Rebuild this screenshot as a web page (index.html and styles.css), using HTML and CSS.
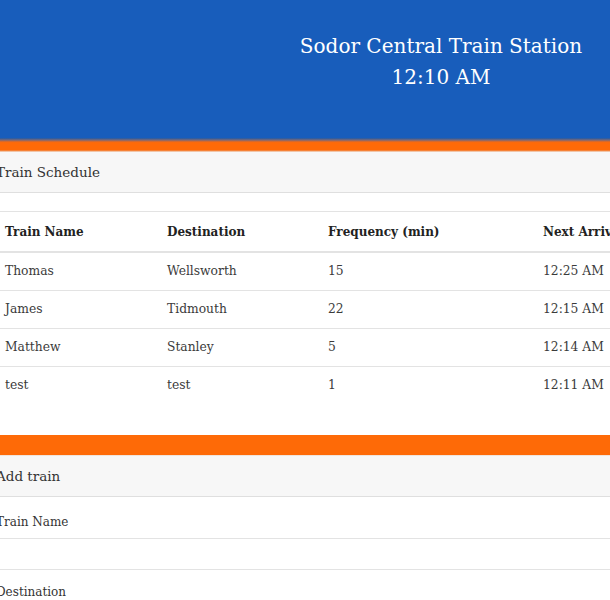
FILE: index.html
```html
<!DOCTYPE html>
<html lang="en">
<head>
<meta charset="utf-8">
<title>Sodor Central Train Station</title>
<link rel="stylesheet" href="styles.css">
</head>
<body>
<header class="hero">
  <div class="hero-text">
    <h1 class="title">Sodor Central Train Station</h1>
    <div class="clock">12:10 AM</div>
  </div>
</header>
<div class="band"></div>
<main class="page">
  <section class="card card-schedule">
    <div class="card-header">Train Schedule</div>
    <div class="card-body">
      <table class="schedule">
        <colgroup>
          <col class="c1"><col class="c2"><col class="c3"><col class="c4">
        </colgroup>
        <thead>
          <tr><th>Train Name</th><th>Destination</th><th>Frequency (min)</th><th>Next Arrival</th></tr>
        </thead>
        <tbody>
          <tr><td>Thomas</td><td>Wellsworth</td><td>15</td><td>12:25 AM</td></tr>
          <tr><td>James</td><td>Tidmouth</td><td>22</td><td>12:15 AM</td></tr>
          <tr><td>Matthew</td><td>Stanley</td><td>5</td><td>12:14 AM</td></tr>
          <tr><td>test</td><td>test</td><td>1</td><td>12:11 AM</td></tr>
        </tbody>
      </table>
    </div>
  </section>
  <section class="card card-add">
    <div class="card-header">Add train</div>
    <form class="card-form">
      <label class="field-label" for="tname">Train Name</label>
      <input class="field-input" id="tname" type="text">
      <label class="field-label" for="tdest">Destination</label>
      <input class="field-input" id="tdest" type="text">
    </form>
  </section>
</main>
</body>
</html>
```

FILE: styles.css
```css
html, body {
  margin: 0;
  padding: 0;
  overflow: hidden;
  background: #fff;
}
body {
  font-family: "DejaVu Serif", "Liberation Serif", serif;
  color: #3b3b3b;
  font-size: 12.8px;
  line-height: 1.5;
}
.hero {
  background: #185dbb;
  height: 138px;
  display: flex;
  justify-content: center;
  padding-left: 272px;
  box-sizing: border-box;
}
.hero-text {
  color: #fff;
  text-align: center;
  padding-top: 31px;
}
.title {
  margin: 0;
  font-weight: normal;
  font-size: 20px;
  line-height: 31px;
}
.clock {
  font-size: 20px;
  line-height: 31px;
}
.band {
  height: 14px;
  background: linear-gradient(#1e5aa8 0, #77687a 2px, #f36a14 4px, #fe6a07 5px, #fe6a07 12px, #ee9a66 13px, #f4efe9 14px);
}
.page {
  margin-left: -18px;
  width: 680px;
}
.card {
  background: #fff;
}
.card-header {
  background: #f7f7f7;
  border-bottom: 1px solid #dfdfdf;
  padding: 0 14px;
  height: 40px;
  line-height: 40px;
  font-size: 13.5px;
  color: #333;
}
.card-body {
  padding: 18px 0 31px;
}
.schedule {
  border-collapse: collapse;
  table-layout: fixed;
  width: 700px;
  margin-left: 13px;
}
.c1 { width: 162px; }
.c2 { width: 161px; }
.c3 { width: 215px; }
.schedule th, .schedule td {
  text-align: left;
  padding: 0 10px;
  border-top: 1px solid #e3e3e3;
  white-space: nowrap;
}
.schedule th {
  height: 39px;
  font-weight: bold;
  color: #222;
  font-size: 12px;
  border-bottom: 2px solid #e3e3e3;
}
.schedule td {
  height: 37px;
  font-size: 12.3px;
}
.card-add {
  border-top: 20px solid #fe6a07;
  box-shadow: inset 0 1px 0 #f0a070;
}
.card-add .card-header {
  border-top: 1px solid #f1e4da;
  height: 40px;
}
.card-form {
  display: flex;
  flex-direction: column;
  padding: 15px 14px 0;
}
.field-label {
  font-size: 12px;
  line-height: 20px;
  color: #333;
  margin-bottom: 6px;
}
.field-input {
  margin: 0 -16px 12px -40px;
  height: 32px;
  box-sizing: border-box;
  border: none;
  border-top: 1px solid #e3e3e3;
  border-bottom: 1px solid #e3e3e3;
  background: #fff;
}
```
